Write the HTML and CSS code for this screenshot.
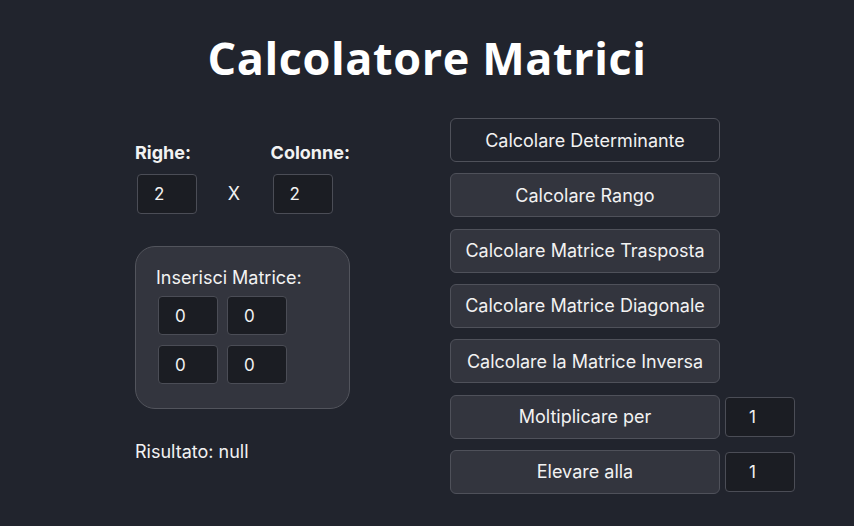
FILE: index.html
```html
<!DOCTYPE html>
<html lang="it">
<head>
    <meta charset="UTF-8">
    <meta name="viewport" content="width=device-width, initial-scale=1.0">
    <title>Calcolatore Matrici</title>
    <link rel="stylesheet" href="styles.css">
</head>
<body>
    <h1 class="title">Calcolatore Matrici</h1>

    <div class="main">
        <div class="left">
            <div class="size-row">
                <div class="size-group">
                    <label for="righe">Righe:</label>
                    <input type="text" id="righe" class="num" value="2">
                </div>
                <span class="times">X</span>
                <div class="size-group">
                    <label for="colonne">Colonne:</label>
                    <input type="text" id="colonne" class="num" value="2">
                </div>
            </div>

            <div class="matrix-box">
                <p class="matrix-label">Inserisci Matrice:</p>
                <div class="matrix-grid">
                    <input type="text" class="num" value="0">
                    <input type="text" class="num" value="0">
                    <input type="text" class="num" value="0">
                    <input type="text" class="num" value="0">
                </div>
            </div>

            <p class="result">Risultato: null</p>
        </div>

        <div class="right">
            <button class="btn btn-active">Calcolare Determinante</button>
            <button class="btn">Calcolare Rango</button>
            <button class="btn">Calcolare Matrice Trasposta</button>
            <button class="btn">Calcolare Matrice Diagonale</button>
            <button class="btn">Calcolare la Matrice Inversa</button>
            <div class="btn-row">
                <button class="btn">Moltiplicare per</button>
                <input type="text" class="num factor" value="1">
            </div>
            <div class="btn-row">
                <button class="btn">Elevare alla</button>
                <input type="text" class="num factor" value="1">
            </div>
        </div>
    </div>
</body>
</html>
```

FILE: styles.css
```css
body {
    font-family: Inter, "Noto Sans", sans-serif;
    background-color: #21242d;
    color: #f2f2f2;
    margin: 0;
    padding: 0;
}
.title {
    font-family: "Open Sans", Inter, sans-serif;
    font-weight: 700;
    font-size: 45px;
    text-align: center;
    color: #ffffff;
    margin: 0;
    padding-top: 27px;
    height: 91px;
    letter-spacing: 0.6px;
}
.main {
    display: flex;
    gap: 100px;
    padding-left: 135px;
}
.left {
    width: 215px;
    padding-top: 24px;
}
.size-row {
    display: flex;
    align-items: flex-end;
}
.size-group {
    display: flex;
    flex-direction: column;
}
.size-group label {
    font-weight: 700;
    font-size: 18px;
    margin-bottom: 11px;
}
.size-group .num {
    margin-left: 2px;
}
.times {
    width: 74px;
    text-align: center;
    font-size: 18px;
    line-height: 40px;
}
.num {
    width: 60px;
    height: 40px;
    box-sizing: border-box;
    background-color: #1b1d23;
    border: 1px solid #4b4d56;
    border-radius: 4px;
    color: #f2f2f2;
    font-family: Inter, sans-serif;
    font-size: 17px;
    padding: 0 0 0 16px;
}
.matrix-box {
    margin-top: 32px;
    width: 215px;
    height: 163px;
    box-sizing: border-box;
    background-color: #33353e;
    border: 1px solid #52545c;
    border-radius: 20px;
    padding: 20px 22px;
}
.matrix-label {
    margin: 0 0 8px -2px;
    font-size: 18px;
}
.matrix-grid {
    display: grid;
    grid-template-columns: 60px 60px;
    gap: 10px 9px;
}
.matrix-grid .num {
    height: 39px;
}
.result {
    margin: 32px 0 0;
    font-size: 18px;
}
.right {
    width: 345px;
    display: flex;
    flex-direction: column;
    gap: 11.33px;
}
.btn {
    width: 270px;
    height: 44px;
    background-color: #33353e;
    border: 1px solid #4f515a;
    border-radius: 6px;
    color: #f2f2f2;
    font-family: Inter, sans-serif;
    font-size: 18px;
    cursor: pointer;
}
.btn-active {
    background-color: #21242d;
}
.btn-row {
    display: flex;
    align-items: center;
    gap: 5px;
}
.factor {
    width: 70px;
    padding-left: 23px;
}
```
